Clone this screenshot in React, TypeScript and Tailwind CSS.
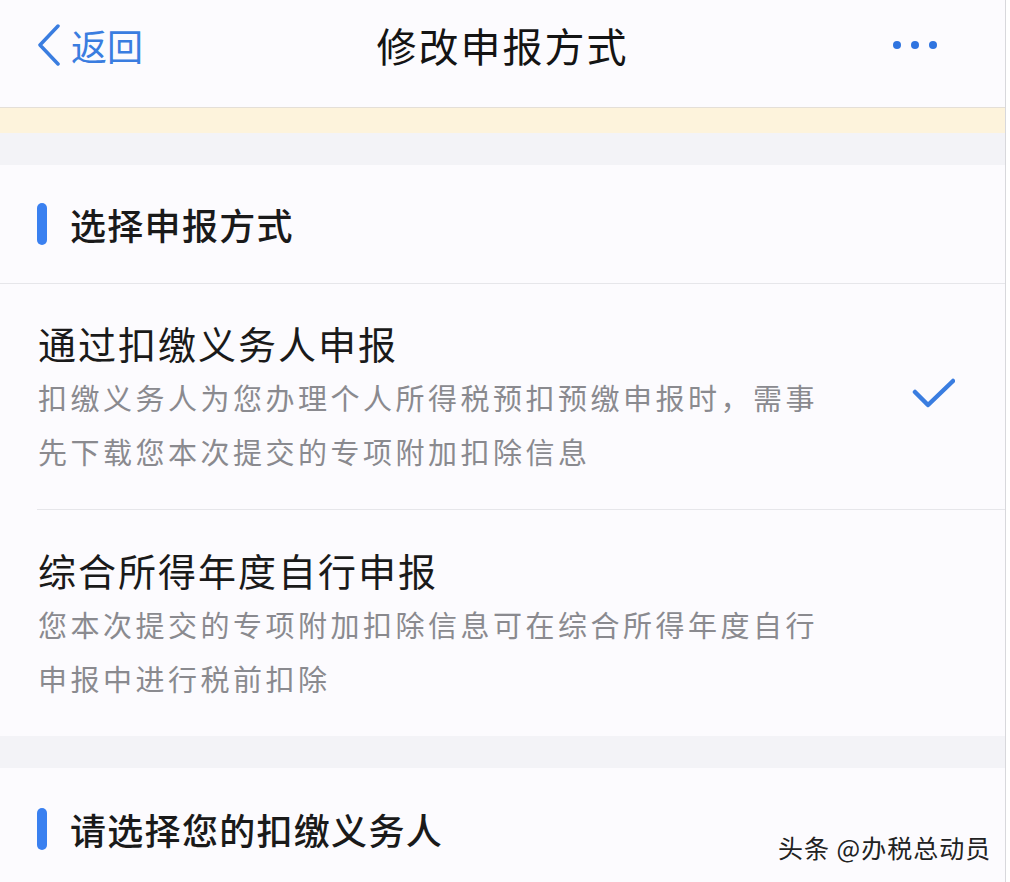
import React from "react";

const font = { fontFamily: '"Noto Sans CJK SC", "Noto Sans", sans-serif' };

function SectionHeading({ text }: { text: string }) {
  return (
    <div className="flex items-center h-full pl-[37px]">
      <div className="w-[10px] h-[42px] rounded-full bg-[#3a80f0]" />
      <div className="ml-[23px] text-[36px] leading-none font-medium tracking-[1.3px] text-[#1a1a1a]">{text}</div>
    </div>
  );
}

function Option({
  title,
  lines,
  checked,
  pt,
  pb,
}: {
  title: string;
  lines: string[];
  checked?: boolean;
  pt: string;
  pb: string;
}) {
  return (
    <div className={`flex items-center pl-[38px] ${pt} ${pb}`}>
      <div className="flex-1">
        <div className="text-[38px] leading-[54px] tracking-[2px] text-[#1a1a1a]">{title}</div>
        {lines.map((l, i) => (
          <div key={i} className="text-[29px] leading-[54px] tracking-[3.5px] text-[#8a8a8f]">
            {l}
          </div>
        ))}
      </div>
      <div className="w-[43px] h-[32px] mr-[50px] mt-[-6px]">
        {checked && (
          <svg width="43" height="32" viewBox="0 0 43 32" fill="none">
            <polyline
              points="3,14 16,27 41,3"
              stroke="#3a7de0"
              strokeWidth="4.5"
              strokeLinecap="round"
              strokeLinejoin="round"
            />
          </svg>
        )}
      </div>
    </div>
  );
}

export default function App() {
  return (
    <div className="relative flex w-[1010px] h-[882px] overflow-hidden bg-white" style={font}>
      <div className="w-[1005px] flex flex-col bg-[#fcfbfe]">
        {/* Header */}
        <div className="h-[108px] shrink-0 border-b border-[#e4dfd8]">
          <div className="relative flex items-center h-[90px] px-[37px]">
            <div className="flex items-center text-[#3a7de0]">
              <svg width="24" height="42" viewBox="0 0 24 42" fill="none">
                <polyline
                  points="21,2 3,21 21,40"
                  stroke="#3a7de0"
                  strokeWidth="3.5"
                  strokeLinecap="round"
                  strokeLinejoin="round"
                />
              </svg>
              <span className="ml-[10px] text-[36px] leading-none">返回</span>
            </div>
            <div className="absolute left-0 right-0 text-center text-[40px] leading-none tracking-[2px] text-[#141414] pointer-events-none">
              修改申报方式
            </div>
            <div className="ml-auto mr-[31px] flex items-center gap-[10px]">
              <div className="w-[8px] h-[8px] rounded-full bg-[#2f74e0]" />
              <div className="w-[8px] h-[8px] rounded-full bg-[#2f74e0]" />
              <div className="w-[8px] h-[8px] rounded-full bg-[#2f74e0]" />
            </div>
          </div>
        </div>
        {/* Yellow notice strip */}
        <div className="h-[25px] shrink-0 bg-[#fdf3dc]" />
        {/* Gray gap */}
        <div className="h-[32px] shrink-0 bg-[#f3f3f7]" />
        {/* Section 1 */}
        <div className="bg-[#fcfbfe]">
          <div className="h-[119px] border-b border-[#e6e6ea]">
            <SectionHeading text="选择申报方式" />
          </div>
          <Option
            title="通过扣缴义务人申报"
            lines={["扣缴义务人为您办理个人所得税预扣预缴申报时，需事", "先下载您本次提交的专项附加扣除信息"]}
            checked
            pt="pt-[32px]"
            pb="pb-[31px]"
          />
          <div className="ml-[37px] h-px bg-[#e6e6ea]" />
          <Option
            title="综合所得年度自行申报"
            lines={["您本次提交的专项附加扣除信息可在综合所得年度自行", "申报中进行税前扣除"]}
            pt="pt-[33px]"
            pb="pb-[31px]"
          />
        </div>
        {/* Gray gap */}
        <div className="h-[32px] shrink-0 bg-[#f3f3f7]" />
        {/* Section 2 */}
        <div className="flex-1 bg-[#fcfbfe]">
          <div className="h-[122px]">
            <SectionHeading text="请选择您的扣缴义务人" />
          </div>
        </div>
      </div>
      <div className="w-px bg-[#d8d8dc]" />
      <div className="flex-1 bg-white" />
      {/* Watermark */}
      <div className="absolute left-[778px] top-[829px] text-[25px] leading-[36px] tracking-[1px] text-[#222] whitespace-nowrap">
        头条 @办税总动员
      </div>
    </div>
  );
}
